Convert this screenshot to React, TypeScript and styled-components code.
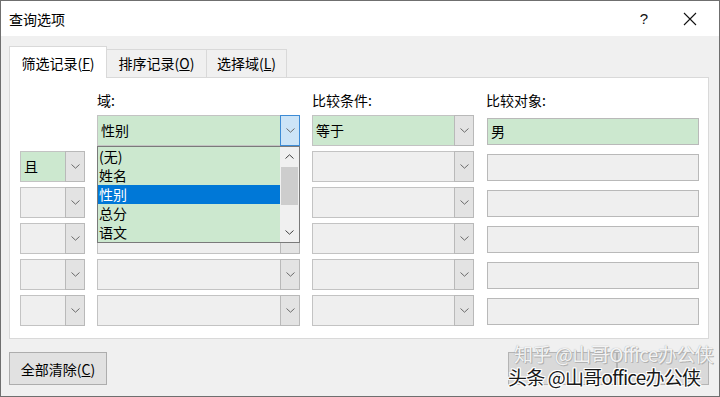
import React from "react";
import styled, { createGlobalStyle, css } from "styled-components";

const GREEN = "#cce8cf";
const FONT = `"Noto Sans CJK SC", "Noto Sans", sans-serif`;

const Global = createGlobalStyle`
  html, body { margin: 0; padding: 0; background: #f0f0f0; overflow: hidden; }
  * { box-sizing: border-box; }
`;

const Window = styled.div`
  width: 720px;
  height: 397px;
  border: 1px solid #6f6f6f;
  background: #f0f0f0;
  display: flex;
  flex-direction: column;
  font-family: ${FONT};
  font-size: 14px;
  color: #000;
`;

const TitleBar = styled.div`
  height: 35px;
  background: #fff;
  display: flex;
  align-items: center;
  padding-left: 8px;
  line-height: 20px;
`;

const Title = styled.div`
  flex: 1;
  font-size: 14px;
`;

const TitleButton = styled.div`
  width: 46px;
  height: 35px;
  display: flex;
  align-items: center;
  justify-content: center;
  font-size: 15px;
  font-family: "Liberation Sans", sans-serif;
  color: #111;
`;

const Body = styled.div`
  flex: 1;
  display: flex;
  flex-direction: column;
  padding: 10px 10px 0 8px;
`;

const TabBar = styled.div`
  display: flex;
  align-items: flex-end;
  height: 31px;
  position: relative;
  z-index: 1;
`;

const Tab = styled.div<{ $active?: boolean; $w: number }>`
  width: ${(p) => p.$w}px;
  display: flex;
  align-items: center;
  justify-content: center;
  border: 1px solid #d9d9d9;
  border-bottom: none;
  line-height: 18px;
  ${(p) =>
    p.$active
      ? css`
          height: 32px;
          background: #fff;
          margin-bottom: -1px;
          padding-top: 1px;
        `
      : css`
          height: 28px;
          background: #f0f0f0;
          margin-left: -1px;
          padding-bottom: 1px;
        `}
`;

const Panel = styled.div`
  background: #fff;
  border: 1px solid #d9d9d9;
  padding: 13px 9px 12px 10px;
  display: grid;
  grid-template-columns: 65px 203px 162px 213px;
  grid-template-rows: 19px repeat(6, 31px);
  column-gap: 12px;
  row-gap: 5px;
`;

const Label = styled.div`
  line-height: 19px;
  font-size: 14px;
`;

const Combo = styled.div<{ $green?: boolean }>`
  position: relative;
  display: flex;
  height: 31px;
  border: 1px solid #c3c3c3;
  background: ${(p) => (p.$green ? GREEN : "#efefef")};
`;

const ComboText = styled.div`
  flex: 1;
  padding-left: 3px;
  line-height: 29px;
  font-size: 14px;
`;

const ArrowBtn = styled.div<{ $focus?: boolean }>`
  width: 20px;
  display: flex;
  align-items: center;
  justify-content: center;
  margin: -1px -1px -1px 0;
  background: ${(p) => (p.$focus ? "#cce4f7" : "#e3e3e3")};
  border: 1px solid ${(p) => (p.$focus ? "#3d8bd6" : "#b9b9b9")};
`;

const Input = styled.div<{ $green?: boolean }>`
  align-self: center;
  height: 27px;
  margin-top: 1px;
  margin-left: 1px;
  border: 1px solid #b9b9b9;
  background: ${(p) => (p.$green ? GREEN : "#efefef")};
  padding-left: 3px;
  line-height: 25px;
  font-size: 14px;
`;

const Empty = styled.div``;

const DropList = styled.div`
  position: absolute;
  left: -1px;
  right: -1px;
  top: 30px;
  height: 97px;
  border: 1px solid #7a7a7a;
  background: ${GREEN};
  display: flex;
  z-index: 5;
`;

const Items = styled.div`
  flex: 1;
  display: flex;
  flex-direction: column;
`;

const Item = styled.div<{ $sel?: boolean }>`
  height: 19px;
  line-height: 19px;
  padding-left: 1px;
  font-size: 14px;
  ${(p) =>
    p.$sel &&
    css`
      background: #0078d7;
      color: #fff;
    `}
`;

const ScrollBar = styled.div`
  width: 19px;
  background: #f0f0f0;
  display: flex;
  flex-direction: column;
`;

const ScrollArrow = styled.div`
  height: 19px;
  display: flex;
  align-items: center;
  justify-content: center;
`;

const Track = styled.div`
  flex: 1;
  display: flex;
  flex-direction: column;
`;

const Thumb = styled.div`
  margin: 1px 1px 0 1px;
  height: 38px;
  background: #cdcdcd;
`;

const Footer = styled.div`
  display: flex;
  justify-content: space-between;
  align-items: flex-start;
  padding-top: 13px;
`;

const Button = styled.div`
  width: 98px;
  height: 33px;
  background: #e1e1e1;
  border: 1px solid #adadad;
  display: flex;
  align-items: center;
  justify-content: center;
  font-size: 14px;
`;

const HiddenButtons = styled.div`
  position: relative;
  width: 201px;
  height: 33px;
  display: flex;
  flex-shrink: 0;
`;

const HiddenBtn = styled.div<{ $w: number }>`
  width: ${(p) => p.$w}px;
  height: 33px;
  flex-shrink: 0;
  background: #d9d9d9;
  border: 1px solid #b4b4b4;
`;

const WatermarkBack = styled.div`
  position: absolute;
  left: 6px;
  top: -9px;
  font-size: 19px;
  line-height: 22px;
  white-space: nowrap;
  color: rgba(255, 255, 255, 0.9);
  text-shadow: 0 0 1px #9a9a9a, 1px 1px 0 #b5b5b5;
  letter-spacing: -0.5px;
`;

const WatermarkFront = styled.div`
  position: absolute;
  left: 0;
  top: 14px;
  font-size: 19px;
  line-height: 22px;
  white-space: nowrap;
  color: #1a1a1a;
  letter-spacing: -0.8px;
  text-shadow: 1px 0 0 #fff, -1px 0 0 #fff, 0 1px 0 #fff, 0 -1px 0 #fff,
    1px 1px 0 #fff, -1px -1px 0 #fff, 1px -1px 0 #fff, -1px 1px 0 #fff;
`;

const Chevron = ({ up, color = "#6a6a6a" }: { up?: boolean; color?: string }) => (
  <svg width="9" height="5" viewBox="0 0 9 5">
    <polyline
      points={up ? "0.5,4.5 4.5,0.8 8.5,4.5" : "0.5,0.5 4.5,4.2 8.5,0.5"}
      fill="none"
      stroke={color}
      strokeWidth="1"
    />
  </svg>
);

const CloseIcon = () => (
  <svg width="14" height="14" viewBox="0 0 14 14">
    <path d="M1 1 L13 13 M13 1 L1 13" stroke="#111" strokeWidth="1.1" fill="none" />
  </svg>
);

const M = ({ c }: { c: string }) => <u>{c}</u>;

type ComboProps = { text?: string; green?: boolean; focus?: boolean; children?: React.ReactNode };
const ComboBox = ({ text, green, focus, children }: ComboProps) => (
  <Combo $green={green}>
    <ComboText>{text}</ComboText>
    <ArrowBtn $focus={focus}>
      <Chevron />
    </ArrowBtn>
    {children}
  </Combo>
);

export default function App() {
  const fields = ["(无)", "姓名", "性别", "总分", "语文"];
  return (
    <>
      <Global />
      <Window>
        <TitleBar>
          <Title>查询选项</Title>
          <TitleButton>?</TitleButton>
          <TitleButton style={{ marginRight: 6 }}>
            <CloseIcon />
          </TitleButton>
        </TitleBar>
        <Body>
          <TabBar>
            <Tab $active $w={98}>
              筛选记录(<M c="F" />)
            </Tab>
            <Tab $w={101}>
              排序记录(<M c="O" />)
            </Tab>
            <Tab $w={81}>
              选择域(<M c="L" />)
            </Tab>
          </TabBar>
          <Panel>
            <Empty />
            <Label>域:</Label>
            <Label>比较条件:</Label>
            <Label>比较对象:</Label>

            <Empty />
            <ComboBox text="性别" green focus>
              <DropList>
                <Items>
                  {fields.map((f) => (
                    <Item key={f} $sel={f === "性别"}>
                      {f}
                    </Item>
                  ))}
                </Items>
                <ScrollBar>
                  <ScrollArrow>
                    <Chevron up color="#404040" />
                  </ScrollArrow>
                  <Track>
                    <Thumb />
                  </Track>
                  <ScrollArrow>
                    <Chevron color="#404040" />
                  </ScrollArrow>
                </ScrollBar>
              </DropList>
            </ComboBox>
            <ComboBox text="等于" green />
            <Input $green>男</Input>

            {[0, 1, 2, 3, 4].map((i) => (
              <React.Fragment key={i}>
                <ComboBox text={i === 0 ? "且" : ""} green={i === 0} />
                <ComboBox />
                <ComboBox />
                <Input />
              </React.Fragment>
            ))}
          </Panel>
          <Footer>
            <Button>
              全部清除(<M c="C" />)
            </Button>
            <HiddenButtons>
              <HiddenBtn $w={109} />
              <HiddenBtn $w={92} />
              <WatermarkBack>知乎 @山哥Office办公侠</WatermarkBack>
              <WatermarkFront>头条 @山哥office办公侠</WatermarkFront>
            </HiddenButtons>
          </Footer>
        </Body>
      </Window>
    </>
  );
}
